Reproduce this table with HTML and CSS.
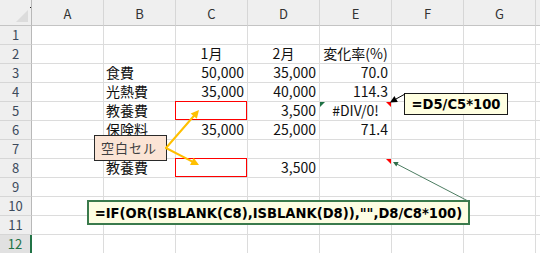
FILE: index.html
```html
<!DOCTYPE html>
<html lang="ja">
<head>
<meta charset="utf-8">
<title>Sheet</title>
<link rel="stylesheet" href="styles.css">
</head>
<body>
<div class="page">
  <div class="sheet">
    <div class="corner"></div>
    <div class="ch">A</div><div class="ch">B</div><div class="ch">C</div><div class="ch">D</div><div class="ch">E</div><div class="ch">F</div><div class="ch">G</div><div class="ch"></div>

    <div class="rh">1</div><div class="c"></div><div class="c"></div><div class="c"></div><div class="c"></div><div class="c"></div><div class="c"></div><div class="c"></div><div class="c"></div>

    <div class="rh">2</div><div class="c"></div><div class="c"></div><div class="c ctr">1月</div><div class="c ctr">2月</div><div class="c ctr">変化率(%)</div><div class="c"></div><div class="c"></div><div class="c"></div>

    <div class="rh">3</div><div class="c"></div><div class="c">食費</div><div class="c n">50,000</div><div class="c n">35,000</div><div class="c n">70.0</div><div class="c"></div><div class="c"></div><div class="c"></div>

    <div class="rh">4</div><div class="c"></div><div class="c">光熱費</div><div class="c n">35,000</div><div class="c n">40,000</div><div class="c n">114.3</div><div class="c"></div><div class="c"></div><div class="c"></div>

    <div class="rh">5</div><div class="c"></div><div class="c">教養費</div><div class="c"><span class="redbox"></span></div><div class="c n">3,500</div><div class="c ctr"><span class="err"></span>#DIV/0!<span class="note"></span></div><div class="c"></div><div class="c"></div><div class="c"></div>

    <div class="rh">6</div><div class="c"></div><div class="c">保険料</div><div class="c n">35,000</div><div class="c n">25,000</div><div class="c n">71.4</div><div class="c"></div><div class="c"></div><div class="c"></div>

    <div class="rh">7</div><div class="c"></div><div class="c"></div><div class="c"></div><div class="c"></div><div class="c"></div><div class="c"></div><div class="c"></div><div class="c"></div>

    <div class="rh">8</div><div class="c"></div><div class="c">教養費</div><div class="c"><span class="redbox"></span></div><div class="c n">3,500</div><div class="c"><span class="note"></span></div><div class="c"></div><div class="c"></div><div class="c"></div>

    <div class="rh">9</div><div class="c"></div><div class="c"></div><div class="c"></div><div class="c"></div><div class="c"></div><div class="c"></div><div class="c"></div><div class="c"></div>

    <div class="rh">10</div><div class="c"></div><div class="c"></div><div class="c"></div><div class="c"></div><div class="c"></div><div class="c"></div><div class="c"></div><div class="c"></div>

    <div class="rh">11</div><div class="c"></div><div class="c"></div><div class="c"></div><div class="c"></div><div class="c"></div><div class="c"></div><div class="c"></div><div class="c"></div>

    <div class="rh active">12</div><div class="c"></div><div class="c"></div><div class="c"></div><div class="c"></div><div class="c"></div><div class="c"></div><div class="c"></div><div class="c"></div>
  </div>

  <div class="callout blank">空白セル</div>
  <div class="callout f1">=D5/C5*100</div>
  <div class="callout f2">=IF(OR(ISBLANK(C8),ISBLANK(D8)),"",D8/C8*100)</div>

  <svg class="arrows" width="540" height="253" viewBox="0 0 540 253" xmlns="http://www.w3.org/2000/svg">
    <g stroke="#ffc000" stroke-width="2" fill="none" stroke-linecap="round">
      <line x1="166" y1="148" x2="193.8" y2="116"/>
      <line x1="166" y1="148" x2="191.9" y2="161.3"/>
    </g>
    <g fill="#ffc000">
      <polygon points="199,110 196.8,118.7 190.7,113.4"/>
      <polygon points="199,165 190.1,164.9 193.7,157.8"/>
    </g>
    <line x1="405" y1="94" x2="396" y2="99" stroke="#000" stroke-width="1"/>
    <polygon points="390,102.5 397.8,102.1 394.4,96" fill="#000"/>
    <line x1="468" y1="201" x2="397" y2="164.1" stroke="#4d7d62" stroke-width="1"/>
    <polygon points="393,162 398.6,162.1 396.3,166.5" fill="#2f6e4a"/>
  </svg>
</div>
</body>
</html>
```

FILE: styles.css
```css
html, body {
  margin: 0;
  padding: 0;
  background: #ffffff;
}

.page {
  position: relative;
  width: 540px;
  height: 253px;
  overflow: hidden;
  font-family: "Noto Sans CJK JP", "Noto Sans", sans-serif;
}

.sheet {
  display: grid;
  grid-template-columns: 32px repeat(8, 72px);
  grid-template-rows: 26px repeat(12, 19px);
  width: 608px;
}

.sheet > div {
  box-sizing: border-box;
  position: relative;
  overflow: visible;
  white-space: nowrap;
}

.corner {
  background: #efefef;
  border-right: 1px solid #b8b8b8;
  border-bottom: 1px solid #c4c4c4;
}

.corner::before {
  content: "";
  position: absolute;
  right: 3px;
  bottom: 3px;
  width: 0;
  height: 0;
  border-left: 12px solid transparent;
  border-bottom: 12px solid #dcdcdc;
}

.corner::after {
  content: "";
  position: absolute;
  left: 30px;
  top: 7px;
  width: 1px;
  height: 1px;
  background: #222;
}

.ch {
  background: #efefef;
  border-right: 1px solid #d6d6d6;
  border-bottom: 1px solid #c4c4c4;
  color: #333;
  font-size: 13px;
  line-height: 18px;
  padding-top: 5px;
  text-align: center;
}

.rh {
  background: #efefef;
  border-right: 1px solid #b8b8b8;
  border-bottom: 1px solid #d6d6d6;
  color: #3c4a5c;
  font-size: 13px;
  line-height: 17px;
  text-align: center;
}

.rh.active {
  background: #e1e1e1;
  color: #217346;
  border-right: 2px solid #217346;
}

.c {
  border-right: 1px solid #dcdcdc;
  border-bottom: 1px solid #dcdcdc;
  color: #111;
  font-size: 14px;
  line-height: 17px;
  padding: 0 3px 0 2px;
}

.n {
  text-align: right;
}

.ctr {
  text-align: center;
  padding: 0;
}

.redbox {
  position: absolute;
  left: -1px;
  top: -1px;
  right: 0;
  bottom: 0;
  border: 1px solid #ff0000;
}

.err {
  position: absolute;
  left: 0;
  top: 0;
  width: 0;
  height: 0;
  border-top: 5px solid #1e7145;
  border-right: 5px solid transparent;
}

.note {
  position: absolute;
  right: 0;
  top: 0;
  width: 0;
  height: 0;
  border-top: 5px solid #ff0000;
  border-left: 5px solid transparent;
}

.callout {
  position: absolute;
  box-sizing: border-box;
  white-space: nowrap;
  text-align: center;
}

.blank {
  left: 94px;
  top: 135px;
  width: 73px;
  height: 26px;
  background: #fbe4d5;
  border: 1px solid #2a2a2a;
  color: #404040;
  font-size: 13px;
  line-height: 24px;
  letter-spacing: 1px;
  padding-right: 3px;
}

.f1 {
  left: 404px;
  top: 93px;
  width: 104px;
  height: 22px;
  background: #ffffe1;
  border: 1px solid #1a1a1a;
  color: #000;
  font-family: "DejaVu Sans Condensed", "DejaVu Sans", sans-serif;
  font-stretch: condensed;
  font-weight: bold;
  font-size: 14.6px;
  line-height: 20px;
}

.f2 {
  left: 87px;
  top: 200px;
  width: 383px;
  height: 25px;
  background: #fdfde3;
  border: 2px solid #3a7a4c;
  color: #000;
  font-family: "DejaVu Sans Condensed", "DejaVu Sans", sans-serif;
  font-stretch: condensed;
  font-weight: bold;
  font-size: 14.6px;
  line-height: 21px;
}

.arrows {
  position: absolute;
  left: 0;
  top: 0;
  pointer-events: none;
}
```
